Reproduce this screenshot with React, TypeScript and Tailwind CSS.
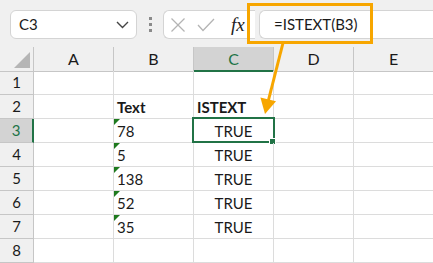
import React from "react";

const cols = ["A", "B", "C", "D", "E"];
const rows = [1, 2, 3, 4, 5, 6, 7, 8];
const data: Record<number, { b?: string; c?: string; bold?: boolean; tri?: boolean }> = {
  2: { b: "Text", c: "ISTEXT", bold: true },
  3: { b: "78", c: "TRUE", tri: true },
  4: { b: "5", c: "TRUE", tri: true },
  5: { b: "138", c: "TRUE", tri: true },
  6: { b: "52", c: "TRUE", tri: true },
  7: { b: "35", c: "TRUE", tri: true },
};

export default function App() {
  return (
    <div
      className="relative w-[433px] h-[263px] overflow-hidden bg-white text-[#1a1a1a]"
      style={{ fontFamily: "Lato, 'Open Sans', sans-serif" }}
    >
      {/* Top bar */}
      <div className="h-[47px] bg-[#f0f0f0] flex items-start pt-[10px] pl-[10px]">
        <div className="w-[127px] h-[29px] bg-white rounded-[6px] border border-[#d4d4d4] flex items-center pl-[8px] pr-[7px] text-[15px]">
          <span>C3</span>
          <svg className="ml-auto" width="13" height="8" viewBox="0 0 13 8">
            <polyline points="1,1 6.5,6.5 12,1" fill="none" stroke="#444" strokeWidth="1.4" />
          </svg>
        </div>
        <div className="w-[26px] h-[29px] flex flex-col items-center justify-center gap-[3px]">
          <div className="w-[3px] h-[3px] bg-[#8a8a8a]" />
          <div className="w-[3px] h-[3px] bg-[#8a8a8a]" />
          <div className="w-[3px] h-[3px] bg-[#8a8a8a]" />
        </div>
        <div className="w-[92px] h-[29px] bg-white rounded-l-[6px] border border-r-0 border-[#d4d4d4] flex items-center pl-[6px]">
          <svg width="16" height="16" viewBox="0 0 16 16">
            <line x1="1.5" y1="1.5" x2="14.5" y2="14.5" stroke="#b4b4b4" strokeWidth="1.3" />
            <line x1="14.5" y1="1.5" x2="1.5" y2="14.5" stroke="#b4b4b4" strokeWidth="1.3" />
          </svg>
          <svg className="ml-[11px]" width="18" height="14" viewBox="0 0 18 14">
            <polyline points="1,7 6,12.5 17,1" fill="none" stroke="#b4b4b4" strokeWidth="1.3" />
          </svg>
          <span
            className="ml-[16px] italic text-[19px] leading-none text-[#222]"
            style={{ fontFamily: "'Liberation Serif', serif" }}
          >
            fx
          </span>
        </div>
        <div className="w-[4px]" />
        <div className="flex-1 h-[29px] bg-white rounded-l-[6px] border border-r-0 border-[#d4d4d4] flex items-center pl-[14px] text-[15px]">
          =ISTEXT(B3)
        </div>
      </div>

      {/* Grid */}
      <div className="grid grid-cols-[34px_80px_80px_80px_80px_80px] auto-rows-[24px] text-[15px]">
        {/* header row */}
        <div className="relative h-[25px] bg-[#f0f0f0] border-r border-b border-[#c6c6c6]">
          <svg className="absolute left-[14px] top-[5px]" width="16" height="16" viewBox="0 0 16 16">
            <polygon points="16,0 16,16 0,16" fill="#b5b5b5" />
          </svg>
        </div>
        {cols.map((c) => (
          <div
            key={c}
            className={
              c === "C"
                ? "h-[25px] bg-[#d3d3d3] border-r border-[#c6c6c6] border-b-2 border-b-[#217346] text-[#217346] text-[16px] flex items-center justify-center"
                : "h-[25px] bg-[#f0f0f0] border-r border-b border-[#c6c6c6] text-[16px] flex items-center justify-center"
            }
          >
            {c}
          </div>
        ))}
        {rows.map((r) => {
          const d = data[r] || {};
          return (
            <React.Fragment key={r}>
              <div
                className={
                  r === 3
                    ? "bg-[#d3d3d3] border-b border-[#c6c6c6] border-r-2 border-r-[#217346] text-[#217346] flex items-center justify-center"
                    : "bg-[#f0f0f0] border-r border-b border-[#c6c6c6] flex items-center justify-center"
                }
              >
                {r}
              </div>
              <div className="border-r border-b border-[#dcdcdc]" />
              <div className={"relative border-r border-b border-[#dcdcdc] flex items-end leading-[18px] pb-[2px] pl-[3px] " + (d.bold ? "font-bold" : "")}>
                {d.tri && (
                  <svg className="absolute left-0 top-0" width="6" height="6" viewBox="0 0 6 6">
                    <polygon points="0,0 6,0 0,6" fill="#1e7a1e" />
                  </svg>
                )}
                {d.b}
              </div>
              <div
                className={
                  "relative border-r border-b border-[#dcdcdc] flex items-end leading-[18px] pb-[2px] " +
                  (d.bold ? "font-bold pl-[3px]" : "justify-center")
                }
              >
                {d.c}
                {r === 3 && (
                  <>
                    <div className="absolute left-[-2px] top-[-2px] right-[-2px] bottom-[-1px] border-2 border-[#217346]" />
                    <div className="absolute right-[-3px] bottom-[-3px] w-[5px] h-[5px] bg-[#217346] border border-white box-content" />
                  </>
                )}
              </div>
              <div className="border-r border-b border-[#dcdcdc]" />
              <div className="border-r border-b border-[#dcdcdc]" />
            </React.Fragment>
          );
        })}
      </div>

      {/* Annotation: orange box + arrow */}
      <div className="absolute left-[247px] top-[3px] w-[126px] h-[41px] border-[3px] border-[#f7a600]" />
      <svg className="absolute left-0 top-0 pointer-events-none" width="433" height="263" viewBox="0 0 433 263">
        <line x1="283" y1="43" x2="268.5" y2="100" stroke="#f7a600" strokeWidth="3" />
        <polygon points="260.4,97.5 276,101.3 265,114" fill="#f7a600" />
      </svg>
    </div>
  );
}
